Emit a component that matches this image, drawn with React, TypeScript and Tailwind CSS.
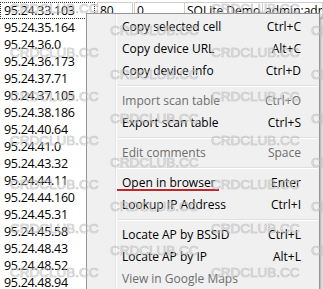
const ips = [
  "95.24.33.103",
  "95.24.35.164",
  "95.24.36.0",
  "95.24.36.173",
  "95.24.37.71",
  "95.24.37.105",
  "95.24.38.186",
  "95.24.40.64",
  "95.24.41.0",
  "95.24.43.32",
  "95.24.44.11",
  "95.24.44.160",
  "95.24.45.31",
  "95.24.45.58",
  "95.24.48.43",
  "95.24.48.52",
  "95.24.48.94",
];

type Entry = { label: string; key?: string; off?: boolean } | "sep";

const menu: Entry[] = [
  { label: "Copy selected cell", key: "Ctrl+C" },
  { label: "Copy device URL", key: "Alt+C" },
  { label: "Copy device info", key: "Ctrl+D" },
  "sep",
  { label: "Import scan table", key: "Ctrl+O", off: true },
  { label: "Export scan table", key: "Ctrl+S" },
  "sep",
  { label: "Edit comments", key: "Space", off: true },
  "sep",
  { label: "Open in browser", key: "Enter" },
  { label: "Lookup IP Address", key: "Ctrl+I" },
  "sep",
  { label: "Locate AP by BSSID", key: "Ctrl+L" },
  { label: "Locate AP by IP", key: "Alt+L" },
  { label: "View in Google Maps", off: true },
];

// watermark grid, staggered
const marks: { x: number; y: number }[] = [];
for (let i = 0; i < 7; i++) {
  marks.push({ x: 10, y: 9 + i * 44 }, { x: 211, y: 9 + i * 44 });
  marks.push({ x: 110, y: 31 + i * 44 }, { x: 311, y: 31 + i * 44 });
}

export default function App() {
  return (
    <div className="relative w-[323px] h-[289px] overflow-hidden bg-white font-['Open_Sans',sans-serif] text-[12px] text-black">
      {/* scan table */}
      <div className="pt-[2px]">
        {ips.map((ip, i) => (
          <div key={ip} className="flex h-[17px]">
            <div
              className={
                "w-[98px] h-[17px] pl-[3px] leading-[16px] text-[12.5px] tracking-[-0.3px] " +
                (i === 0 ? "border border-dotted border-[#333]" : "border border-transparent")
              }
            >
              {ip}
            </div>
            {i === 0 && (
              <div className="flex ml-[2px] h-[17px] leading-[15px]">
                <div className="w-[36px] border border-[#cfcfcf] pl-[2px]">80</div>
                <div className="w-[51px] ml-[1px] border border-[#cfcfcf] pl-[2px]">0</div>
                <div className="w-[78px] border border-l-0 border-[#cfcfcf] pl-[2px] whitespace-nowrap overflow-hidden">
                  SQLite Demo
                </div>
                <div className="w-[60px] border border-l-0 border-[#cfcfcf] pl-[2px] whitespace-nowrap overflow-hidden">
                  admin:admin
                </div>
              </div>
            )}
          </div>
        ))}
      </div>

      {/* context menu */}
      <div className="absolute left-[86px] top-[13px] w-[234px] border border-[#979797] bg-[#f0f0f0] py-[2px] shadow-[2px_2px_3px_rgba(0,0,0,0.3)]">
        <div className="absolute left-[28px] top-0 bottom-0 w-[2px] border-l border-[#e2e3e3] bg-white" />
        <div className="relative">
          {menu.map((m, i) =>
            m === "sep" ? (
              <div key={i} className="h-[8px] flex flex-col justify-center pl-[31px] pr-[1px]">
                <div className="h-px bg-[#e0e0e0]" />
                <div className="h-px bg-white" />
              </div>
            ) : (
              <div
                key={i}
                className={
                  "h-[22px] flex items-center justify-between pl-[35px] pr-[18px] " +
                  (m.off ? "text-[#6d6d6d]" : "text-black")
                }
              >
                <span>{m.label}</span>
                {m.key && <span>{m.key}</span>}
              </div>
            )
          )}
        </div>
      </div>

      {/* red marker under "Open in browser" */}
      <div className="absolute left-[117px] top-[189px] w-[102px] h-[2px] bg-[#c0272d]" />

      {/* watermark */}
      <div className="absolute inset-0 pointer-events-none font-['Liberation_Sans',sans-serif] text-[13.5px]">
        {marks.map((p, i) => (
          <span
            key={i}
            className="absolute h-[16px] leading-[16px] whitespace-nowrap text-transparent [-webkit-text-stroke:0.6px_#bdbdbd]"
            style={{ left: p.x, top: p.y - 8 }}
          >
            CRDCLUB.CC
          </span>
        ))}
      </div>
    </div>
  );
}
